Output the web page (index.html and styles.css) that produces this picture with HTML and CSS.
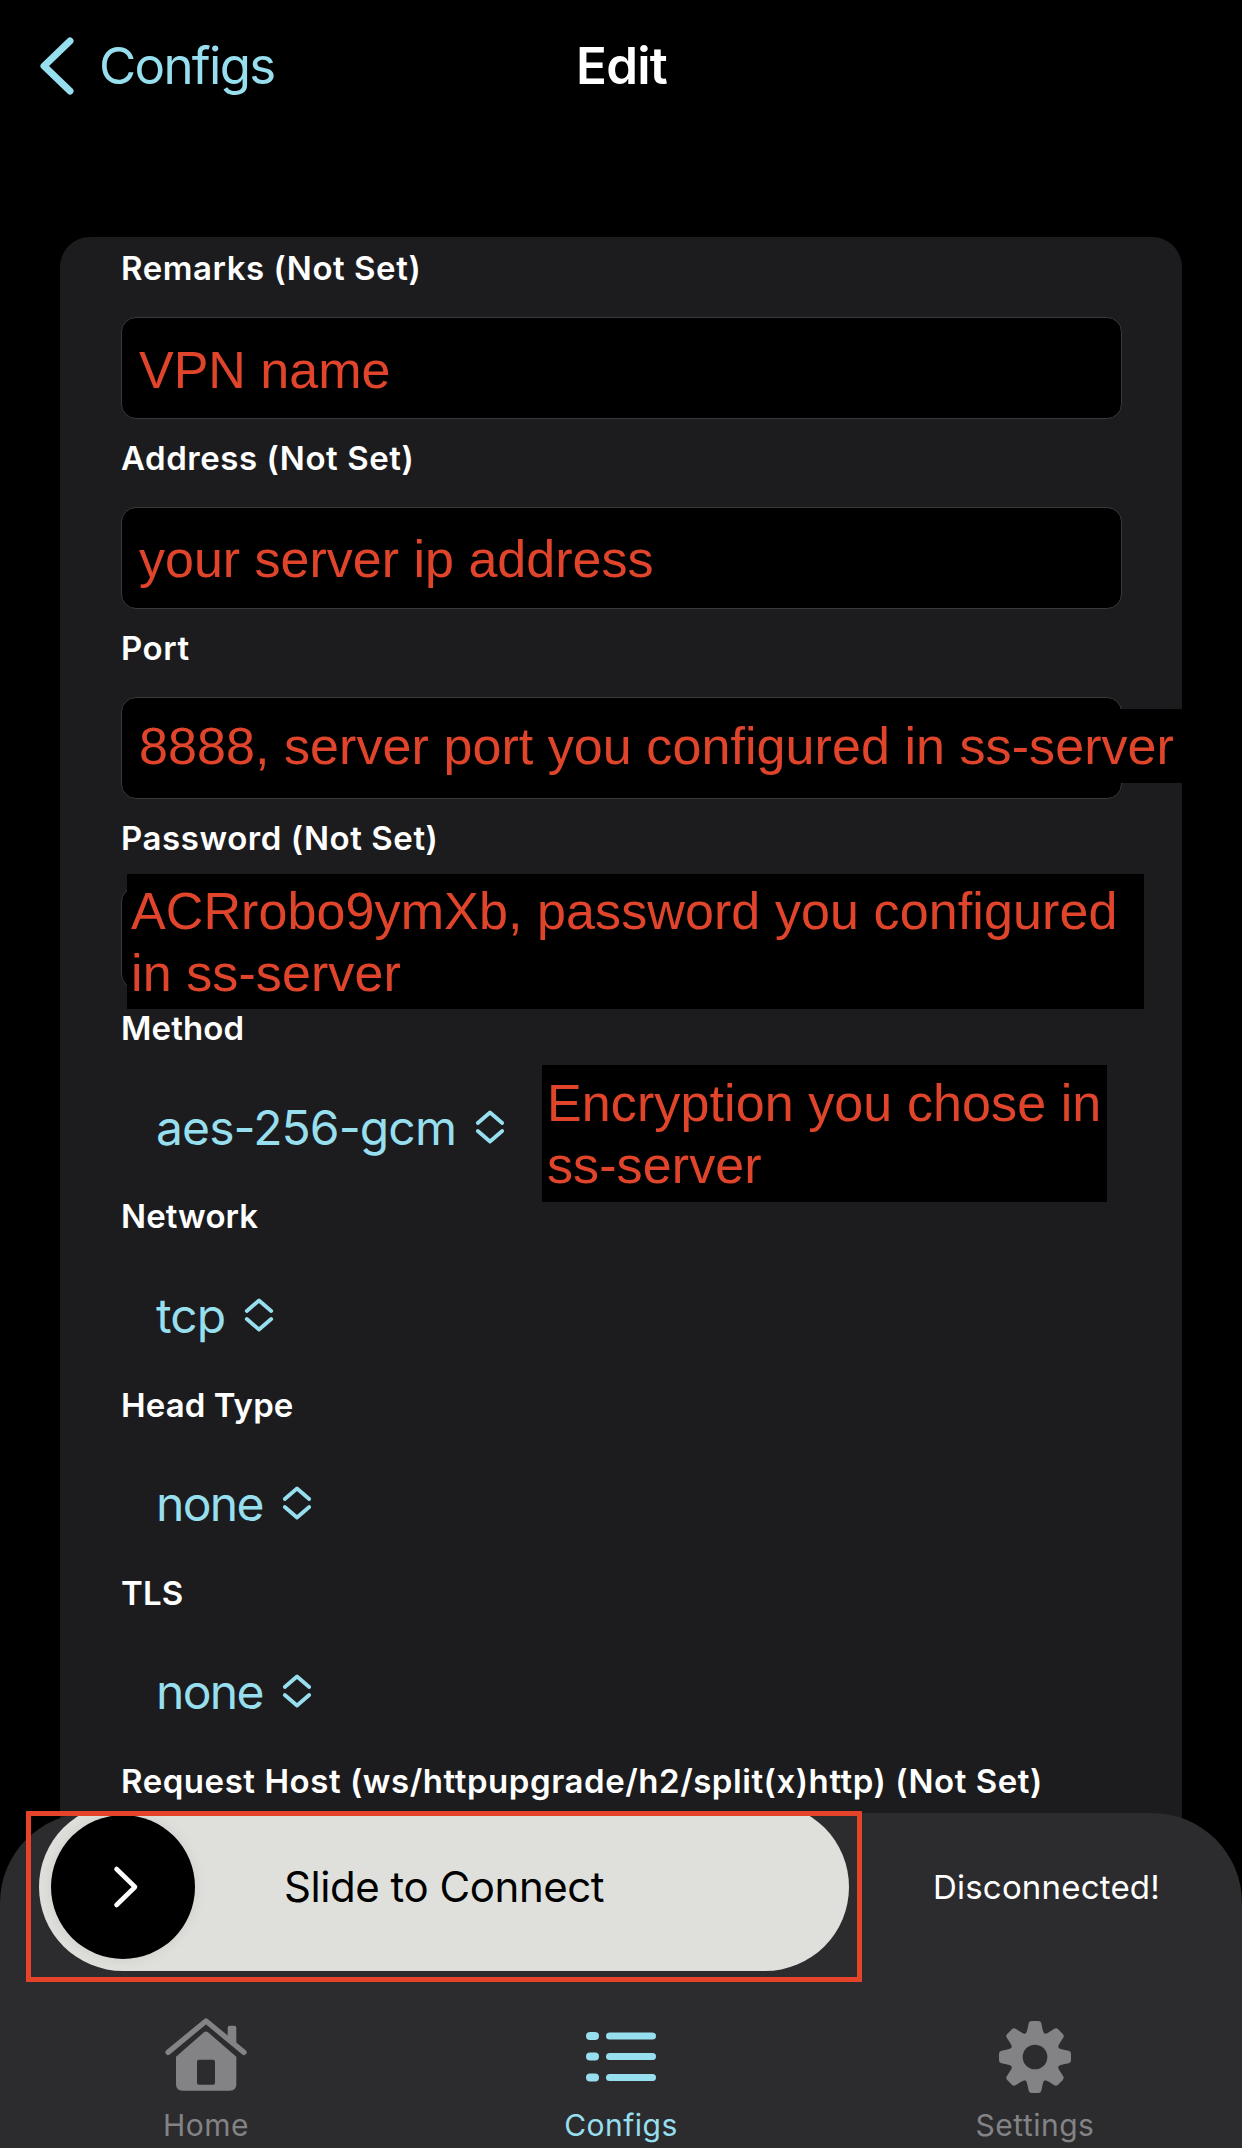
FILE: index.html
```html
<!DOCTYPE html>
<html lang="en">
<head>
<meta charset="utf-8">
<title>Edit</title>
<link rel="stylesheet" href="styles.css">
</head>
<body>
<svg class="defs" width="0" height="0">
  <symbol id="updown" viewBox="0 0 30 36"><path d="M2.800 14 15 3.500 27.200 14M2.800 22 15 32.500 27.200 22" fill="none" stroke="currentColor" stroke-width="3.800" stroke-linecap="round" stroke-linejoin="round"/></symbol>
</svg>
<div class="screen">
  <header class="nav">
    <a class="back">
      <svg width="34" height="58" viewBox="0 0 34 58"><path d="M30 4 4 29 30 54" fill="none" stroke="currentColor" stroke-width="7" stroke-linecap="round" stroke-linejoin="round"/></svg>
      <span>Configs</span>
    </a>
    <h1 class="title">Edit</h1>
  </header>

  <main class="card">
    <section class="field"><label class="label wide">Remarks (Not Set)</label><div class="input remarks">VPN name</div></section>
    <section class="field"><label class="label wide">Address (Not Set)</label><div class="input address">your server ip address</div></section>
    <section class="field"><label class="label wide">Port</label><div class="input"></div><p class="note note-port">8888, server port you configured in ss-server</p></section>
    <section class="field"><label class="label wide">Password (Not Set)</label><div class="input"></div><p class="note note-password">ACRrobo9ymXb, password you configured<br>in ss-server</p></section>
    <section class="field pick"><label class="label">Method</label><div class="select"><span class="v-aes">aes-256-gcm</span><svg class="updown"><use href="#updown"/></svg></div><p class="note note-method">Encryption you chose in<br>ss-server</p></section>
    <section class="field pick"><label class="label">Network</label><div class="select"><span class="v-tcp">tcp</span><svg class="updown"><use href="#updown"/></svg></div></section>
    <section class="field pick"><label class="label">Head Type</label><div class="select"><span class="v-none">none</span><svg class="updown"><use href="#updown"/></svg></div></section>
    <section class="field pick"><label class="label">TLS</label><div class="select"><span class="v-none">none</span><svg class="updown"><use href="#updown"/></svg></div></section>
    <section class="field"><label class="label wide">Request Host (ws/httpupgrade/h2/split(x)http) (Not Set)</label></section>
  </main>

  <footer class="panel">
    <div class="connect">
      <div class="slider">
        <div class="knob"><svg width="28" height="44" viewBox="0 0 28 44"><path d="M4.500 4 23 22 4.500 40" fill="none" stroke="#fff" stroke-width="4.600" stroke-linecap="round" stroke-linejoin="round"/></svg></div>
        <span class="slide-text">Slide to Connect</span>
      </div>
      <span class="status">Disconnected!</span>
    </div>
    <nav class="tabs">
      <a class="tab home">
        <svg class="house" width="82" height="73" viewBox="75 52 244 219" fill="currentColor">
          <path d="M83 155 197 61 311 155" fill="none" stroke="currentColor" stroke-width="16" stroke-linecap="round" stroke-linejoin="round"/>
          <path d="M262 112V81q0-6 6-6h14q6 0 6 6v53z"/>
          <path fill-rule="evenodd" d="M107 168 191 95q6-5 12 0l85 73v82q0 20-20 20H127q-20 0-20-20zM176 177q-6 0-6 6v63q0 6 6 6h42q6 0 6-6v-63q0-6-6-6z"/>
        </svg>
        <span>Home</span>
      </a>
      <a class="tab active">
        <svg width="70" height="52" viewBox="0 0 70 52" fill="currentColor">
          <rect x="0" y="1" width="13" height="8" rx="4"/><rect x="20" y="1.500" width="50" height="7" rx="3.500"/>
          <rect x="0" y="21.500" width="13" height="8" rx="4"/><rect x="20" y="22" width="50" height="7" rx="3.500"/>
          <rect x="0" y="42.500" width="13" height="8" rx="4"/><rect x="20" y="43" width="50" height="7" rx="3.500"/>
        </svg>
        <span>Configs</span>
      </a>
      <a class="tab">
        <svg width="72" height="72" viewBox="-108 -108 216 216" fill="currentColor">
          <defs><path id="tooth" d="M-30-66Q-24-74-22-86L-19-101Q-17-108-10-108H10Q17-108 19-101L22-86Q24-74 30-66L24-40H-24Z"/>
          <mask id="hub"><rect x="-108" y="-108" width="216" height="216" fill="#fff"/><circle r="37" fill="#000"/></mask></defs>
          <g mask="url(#hub)"><circle r="76"/>
          <use href="#tooth"/><use href="#tooth" transform="rotate(45)"/><use href="#tooth" transform="rotate(90)"/><use href="#tooth" transform="rotate(135)"/><use href="#tooth" transform="rotate(180)"/><use href="#tooth" transform="rotate(225)"/><use href="#tooth" transform="rotate(270)"/><use href="#tooth" transform="rotate(315)"/></g>
        </svg>
        <span>Settings</span>
      </a>
    </nav>
  </footer>
  <div class="highlight"></div>
</div>
</body>
</html>
```
FILE: styles.css
```css
* { box-sizing: border-box; }
body { margin: 0; background: #000; font-family: Inter, "Liberation Sans", sans-serif; color: #fff; }
h1, p { margin: 0; }
svg { display: block; flex: none; }
.defs { position: absolute; }
.screen { position: relative; width: 1242px; height: 2148px; overflow: hidden; background: #000; display: flex; flex-direction: column; }

.nav { flex: none; height: 237px; display: grid; grid-template-columns: 1fr auto 1fr; align-items: start; padding: 36px 39px 0 40px; }
.back { display: flex; align-items: center; gap: 25px; height: 60px; font-size: 51px; line-height: 60px; color: #97dfee; letter-spacing: -1.7px; }
.title { font-size: 51px; line-height: 60px; font-weight: 600; letter-spacing: -0.8px; }

.card { height: 1600px; flex: none; margin: 0 60px; padding: 0 60px 0 61px; background: #1c1c1e; border-radius: 30px 30px 0 0; }
.field { position: relative; height: 190px; }
.pick { height: 188.3px; }
.label { display: block; height: 62px; line-height: 62px; margin-bottom: 18px; font-size: 33px; font-weight: 600; letter-spacing: 0.1px; white-space: nowrap; }
.wide { letter-spacing: 0.55px; }
.input { height: 102px; border: 1px solid #39393b; border-radius: 15px; background: #000; padding-left: 17px; line-height: 100px; font-family: "Liberation Sans", Arial, sans-serif; font-size: 52px; color: #e0452c; }
.remarks { padding-top: 2px; }
.address { padding-top: 1px; }
.select { display: flex; align-items: center; gap: 19px; height: 100px; padding-left: 35px; font-size: 48px; color: #97dfee; }
.v-aes { letter-spacing: -0.9px; }
.v-tcp { letter-spacing: -0.9px; }
.v-none { letter-spacing: -1.7px; }
.updown { width: 30px; height: 36px; margin-top: -1px; }

.note { position: absolute; background: #000; font-family: "Liberation Sans", Arial, sans-serif; font-size: 52px; line-height: 62px; color: #e0452c; letter-spacing: 0.1px; white-space: nowrap; }
.note-port { left: 2px; top: 92px; width: 1059px; height: 74px; padding: 6px 0 0 16px; letter-spacing: 0.07px; }
.note-password { left: 6px; top: 67px; width: 1017px; height: 135px; padding: 6px 0 0 4px; }
.note-method { left: 421px; top: 68px; width: 565px; height: 137px; padding: 7px 0 0 5px; }

.panel { position: absolute; left: 0; right: 0; bottom: 0; height: 335px; background: #2c2c2e; border-radius: 90px 90px 0 0; overflow: hidden; }
.connect { display: flex; align-items: center; height: 168px; margin-top: -10px; padding-left: 39px; }
.slider { display: flex; align-items: center; width: 810px; height: 168px; border-radius: 84px; background: #dfe0db; padding-left: 12px; }
.knob { display: flex; align-items: center; justify-content: center; width: 144px; height: 144px; padding-left: 5px; border-radius: 50%; background: #000; box-shadow: 0 0 14px rgba(0,0,0,.08); }
.slide-text { margin-left: 89px; font-size: 42px; line-height: 50px; padding-bottom: 1px; letter-spacing: -0.45px; color: #000; }
.status { margin-left: 84px; padding-bottom: 1px; font-size: 33px; letter-spacing: 0.2px; }
.tabs { display: grid; grid-template-columns: repeat(3, 414px); margin-top: 45px; height: 130px; }
.tab { display: grid; grid-template-rows: 82px 54px; justify-items: center; align-items: center; color: #838385; font-size: 30px; line-height: 46px; letter-spacing: 0.5px; }
.home { padding-right: 2px; }
.house { margin-bottom: 6px; }
.tab.active { color: #97dfee; }
.highlight { position: absolute; left: 26px; top: 1811px; width: 836px; height: 171px; border: 5px solid #e5432a; }
```
